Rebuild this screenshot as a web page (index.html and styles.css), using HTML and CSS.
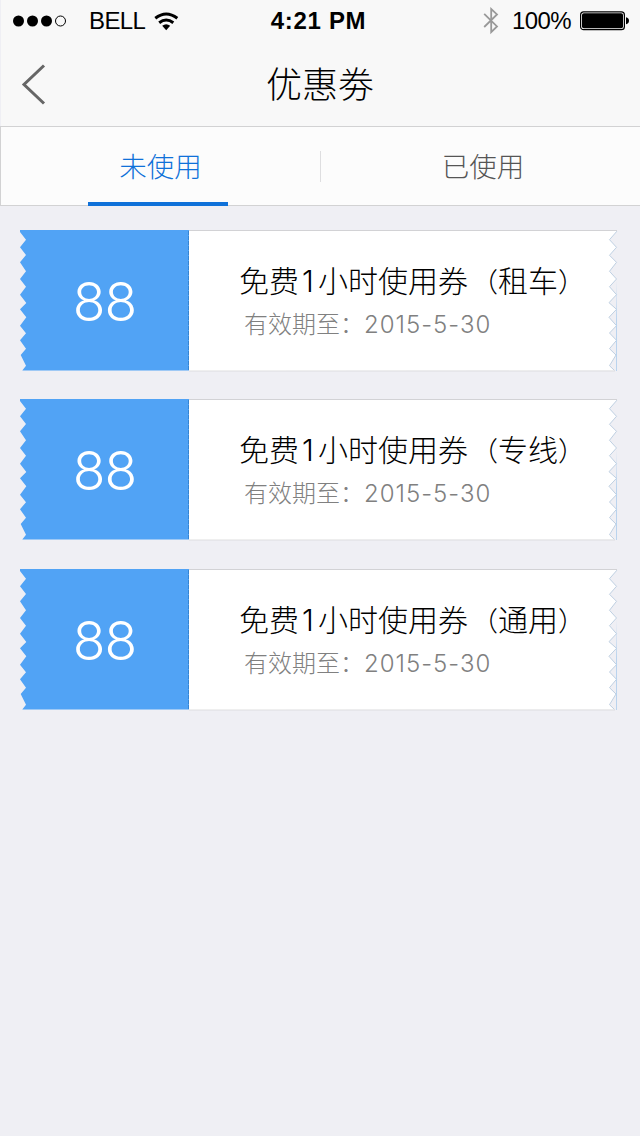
FILE: index.html
```html
<!DOCTYPE html>
<html lang="zh-CN">
<head>
<meta charset="utf-8">
<title>优惠劵</title>
<link rel="stylesheet" href="styles.css">
</head>
<body>
<svg class="defs" width="0" height="0">
  <defs>
    <linearGradient id="edge" gradientUnits="userSpaceOnUse" x1="0" y1="50" x2="0" y2="90"><stop offset="0" stop-color="#b9d3ee" stop-opacity="0"/><stop offset="1" stop-color="#b9d3ee"/></linearGradient>
    <symbol id="ticket" viewBox="0 0 598 142">
      <path d="M169 0H596.5V1.7L589.5 9.7 596.5 17.3 589.5 25.3 596.5 32.3 589.5 41.3 596.5 49 589.5 56.7 596.5 64.7 589 72.7 596.5 79.3 589 87.3 596.5 95.7 589.5 103 596.5 110.3 589.5 118.7 596 125 589.5 135.7 594.5 140.5 169 141Z" fill="#fff"/>
      <path d="M596.5 .5V1.7L589.5 9.7 596.5 17.3 589.5 25.3 596.5 32.3 589.5 41.3 596.5 49 589.5 56.7 596.5 64.7 589 72.7 596.5 79.3 589 87.3 596.5 95.7 589.5 103 596.5 110.3 589.5 118.7 596 125 589.5 135.7 594.5 140.5" fill="none" stroke="#bfd0e2"/>
      <path d="M169 .5H597" stroke="#d2d2d5"/>
      <path d="M169 141H595" stroke="#dededf"/>
      <path d="M596 50H597V141H596Z" fill="url(#edge)"/>
      <path d="M0 0H169V140.5H2.3L6 135.7 .7 125 6 118.7 0 110.3 6 103.3 0 95.7 6.3 87.3 0 79.3 6.3 73 0 64.7 6 56.7 0 49 6 41.3 0 32.3 6 25 0 17.3 6 9.7 0 2Z" fill="#51a3f5"/>
      <path d="M168.5 1V140" stroke="#3585d3" stroke-dasharray="4 1"/>
    </symbol>
  </defs>
</svg>
<div class="screen">
  <header class="top">
    <div class="status">
      <div class="status-left">
        <svg class="signal" width="54" height="12" viewBox="0 0 54 12"><circle cx="5.5" cy="6" r="5.5"/><circle cx="19.5" cy="6" r="5.5"/><circle cx="33.5" cy="6" r="5.5"/><circle cx="47.5" cy="6" r="5" fill="none" stroke="#000"/></svg>
        <span class="carrier">BELL</span>
        <svg class="wifi" width="25" height="19" viewBox="0 0 25 19"><g fill="none" stroke="#000" stroke-width="3"><path d="M1.3 6.2Q12.2-2.2 23.3 6.2"/><path d="M5.2 10.7Q12.2 5.2 19.3 10.7"/></g><path d="M8.2 13.8Q12.2 10.8 16.2 13.8L12.2 18.2Z"/></svg>
      </div>
      <span class="clock">4:21 PM</span>
      <div class="status-right">
        <svg class="bluetooth" width="16" height="28" viewBox="0 0 16 28"><path d="M1.2 6.8 14 19.4 8.2 25.2V2L14 7.4 1.2 20" fill="none" stroke="#999" stroke-width="1.8"/></svg>
        <span class="percent">100%</span>
        <svg class="battery" width="50" height="20" viewBox="0 0 50 20"><rect x=".6" y=".9" width="43.8" height="17.8" rx="3" fill="none" stroke="#000" stroke-width="1.2"/><rect x="2" y="2.3" width="41" height="15" rx="1.8"/><path d="M46 6.3Q49 7.2 49 9.8T46 13.3Z"/></svg>
      </div>
    </div>
    <div class="nav">
      <svg class="back" width="26" height="44" viewBox="0 0 26 44"><path d="M24 2.5 4 21.5 24 40.5" fill="none" stroke="#666" stroke-width="3"/></svg>
      <h1 class="title">优惠劵</h1>
    </div>
  </header>
  <nav class="tabs">
    <a class="tab tab-active">未使用</a>
    <i class="divider"></i>
    <a class="tab">已使用</a>
  </nav>
  <main class="coupons">
    <article class="coupon">
      <svg class="shape" width="598" height="142"><use href="#ticket"/></svg>
      <div class="amount">88</div>
      <div class="info"><p class="name">免费<span class="one">1</span>小时使用券<span class="paren open">（</span>租车<span class="paren">）</span></p><p class="expiry">有效期至：<span class="date">2015-5-30</span></p></div>
    </article>
    <article class="coupon">
      <svg class="shape" width="598" height="142"><use href="#ticket"/></svg>
      <div class="amount">88</div>
      <div class="info"><p class="name">免费<span class="one">1</span>小时使用券<span class="paren open">（</span>专线<span class="paren">）</span></p><p class="expiry">有效期至：<span class="date">2015-5-30</span></p></div>
    </article>
    <article class="coupon">
      <svg class="shape" width="598" height="142"><use href="#ticket"/></svg>
      <div class="amount">88</div>
      <div class="info"><p class="name">免费<span class="one">1</span>小时使用券<span class="paren open">（</span>通用<span class="paren">）</span></p><p class="expiry">有效期至：<span class="date">2015-5-30</span></p></div>
    </article>
  </main>
</div>
</body>
</html>
```
FILE: styles.css
```css
* { box-sizing: border-box; }
body { margin: 0; background: #efeff4; font-family: "Noto Sans CJK SC", sans-serif; font-weight: 300; color: #000; }
h1, p { margin: 0; font-weight: 300; }
svg { display: block; flex: none; }
.defs { position: absolute; }
.screen { width: 640px; height: 1136px; overflow: hidden; }
.top { height: 127px; background: #f8f8f8; border-bottom: 1px solid #d2d2d3; box-shadow: inset 1px 0 #efeff4; }
.status { height: 42px; display: grid; grid-template-columns: 1fr auto 1fr; align-items: center; padding: 0 10px 0 13px; font-family: "Liberation Sans", Arial, sans-serif; font-weight: 400; font-size: 24px; line-height: 42px; }
.status-left, .status-right { display: flex; align-items: center; }
.status-right { justify-content: flex-end; }
.carrier { margin-left: 22px; letter-spacing: -.6px; }
.wifi { margin-left: 9px; }
.clock { font-weight: 700; font-size: 24px; letter-spacing: .7px; margin: 0 3px 0 -3px; }
.percent { margin: 0 9px 0 13px; letter-spacing: -.6px; }
.nav { height: 84px; display: grid; grid-template-columns: 48px 1fr 48px; align-items: center; }
.back { margin: 2px 0 0 20px; }
.title { text-align: center; font-size: 36px; line-height: 80px; height: 84px; }
.tabs { height: 79px; background: #fcfcfc; border-left: 1px solid #d2d2d3; border-bottom: 1px solid #d2d2d3; display: flex; justify-content: space-between; align-items: center; padding: 0 87px; }
.tab { width: 140px; height: 79px; line-height: 76px; text-align: center; font-size: 27.5px; color: #555; }
.tab-active { color: #0f71d9; border-bottom: 4px solid #0f71d9; padding-left: 5px; }
.divider { width: 1px; height: 31px; background: #dedee0; }
.coupons { padding: 24px 20px; display: flex; flex-direction: column; gap: 27px; }
.coupon { height: 142px; display: grid; grid-template-columns: 169px 1fr; }
.coupon:last-child { margin-top: 1px; }
.shape { grid-area: 1 / 1 / 2 / 3; }
.amount { grid-area: 1 / 1; color: #fff; text-align: center; font-family: Inter, "Liberation Sans", sans-serif; font-size: 53.5px; letter-spacing: -1px; line-height: 143px; }
.info { grid-area: 1 / 2; padding: 27px 0 0 50px; white-space: nowrap; }
.name { font-size: 30px; line-height: 44px; height: 44px; }
.one { display: inline-block; width: 19px; padding-right: 1px; text-align: center; font-family: Inter, "Liberation Sans", sans-serif; }
.paren { display: inline-block; width: 30px; font-size: 27px; }
.open { text-align: right; }
.expiry { margin: 1px 0 0 5px; font-size: 24px; line-height: 42px; color: #808080; }
.date { font-family: Inter, "Liberation Sans", sans-serif; letter-spacing: 1px; }
```
